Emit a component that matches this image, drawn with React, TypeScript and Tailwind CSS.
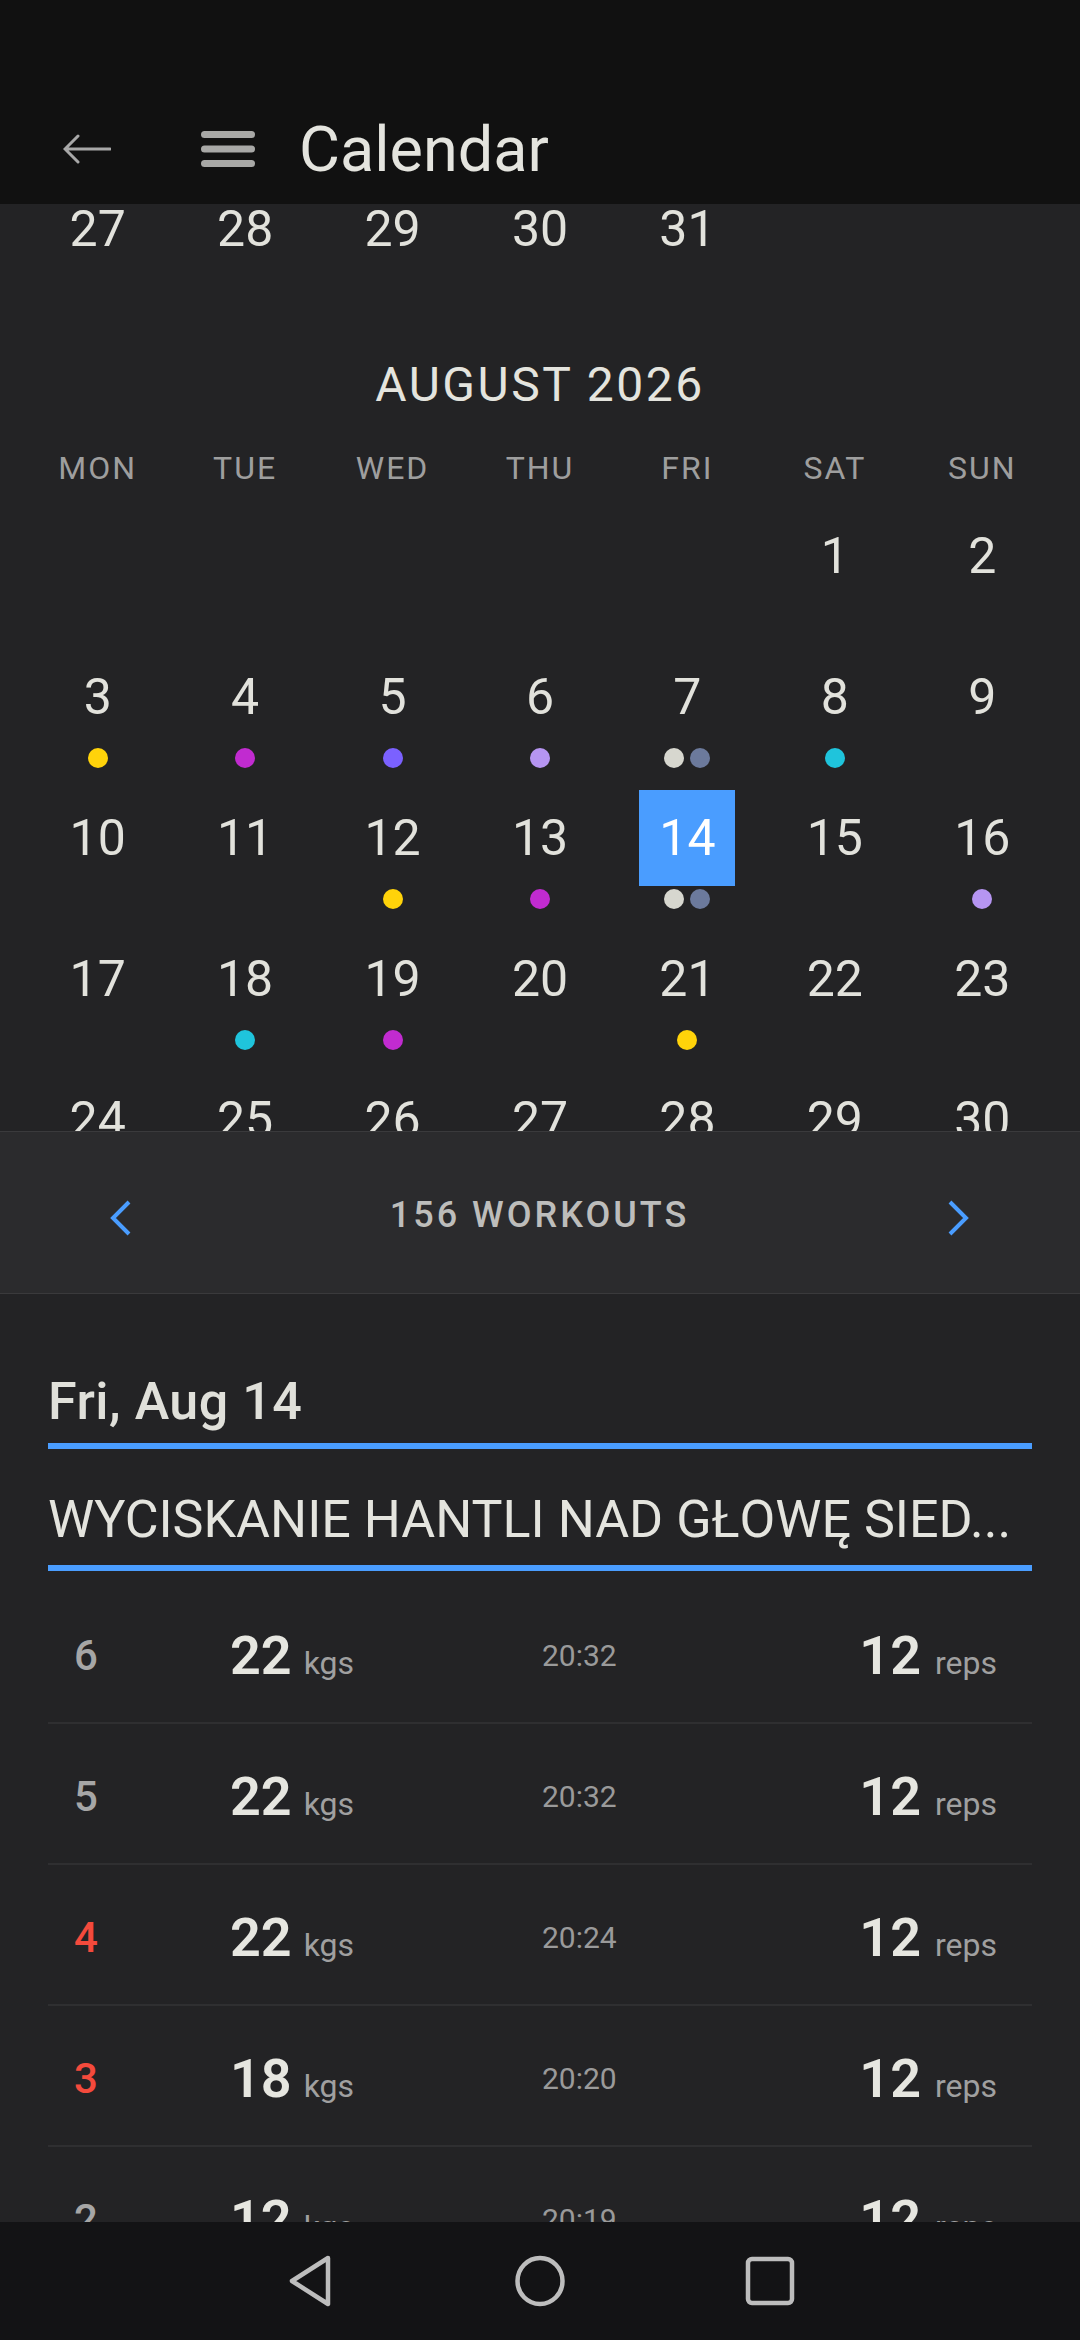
import React from "react";

const Y = "#ffd30a";
const M = "#c12bd0";
const I = "#7b61ff";
const L = "#b695f2";
const C = "#1fc4dc";
const G = "#d7d7cf";
const S = "#6c7a9c";

type Day = { n: number; dots?: string[]; selected?: boolean } | null;

const july: number[] = [27, 28, 29, 30, 31];

const weeks: Day[][] = [
  [null, null, null, null, null, { n: 1 }, { n: 2 }],
  [
    { n: 3, dots: [Y] },
    { n: 4, dots: [M] },
    { n: 5, dots: [I] },
    { n: 6, dots: [L] },
    { n: 7, dots: [G, S] },
    { n: 8, dots: [C] },
    { n: 9 },
  ],
  [
    { n: 10 },
    { n: 11 },
    { n: 12, dots: [Y] },
    { n: 13, dots: [M] },
    { n: 14, dots: [G, S], selected: true },
    { n: 15 },
    { n: 16, dots: [L] },
  ],
  [
    { n: 17 },
    { n: 18, dots: [C] },
    { n: 19, dots: [M] },
    { n: 20 },
    { n: 21, dots: [Y] },
    { n: 22 },
    { n: 23 },
  ],
  [{ n: 24 }, { n: 25 }, { n: 26 }, { n: 27 }, { n: 28 }, { n: 29 }, { n: 30 }],
];

const sets = [
  { set: 6, kg: 22, time: "20:32", reps: 12, red: false },
  { set: 5, kg: 22, time: "20:32", reps: 12, red: false },
  { set: 4, kg: 22, time: "20:24", reps: 12, red: true },
  { set: 3, kg: 18, time: "20:20", reps: 12, red: true },
  { set: 2, kg: 12, time: "20:19", reps: 12, red: false },
];

function WeekRow({ days }: { days: Day[] }) {
  return (
    <div className="grid grid-cols-7 px-[24px]">
      {days.map((d, i) => (
        <div key={i} className="flex flex-col items-center">
          <div
            className={
              "w-[96px] h-[96px] flex items-center justify-center text-[50px] " +
              (d?.selected ? "bg-[#4a9dff] text-white" : "text-[#e2e2dc]")
            }
          >
            {d ? d.n : ""}
          </div>
          <div className="h-[45px] flex justify-center gap-[6px] pt-[3px]">
            {d?.dots?.map((c, j) => (
              <span key={j} className="w-[20px] h-[20px] rounded-full" style={{ backgroundColor: c }} />
            ))}
          </div>
        </div>
      ))}
    </div>
  );
}

export default function App() {
  return (
    <div className="w-[1080px] h-[2340px] bg-[#232325] flex flex-col overflow-hidden font-['Roboto',sans-serif]">
      {/* top bar */}
      <header className="h-[204px] shrink-0 bg-[#111111] pt-[94px]">
        <div className="h-[110px] flex items-center pl-[63px]">
          <svg width="48" height="30" viewBox="0 0 48 30" fill="none" stroke="#a8a8a8" strokeWidth="3" strokeLinecap="round">
            <path d="M47 15H3M15 2L2 15l13 13" />
          </svg>
          <svg className="ml-[90px]" width="54" height="36" viewBox="0 0 54 36" fill="#a8a8a6">
            <rect x="0" y="0" width="54" height="7" rx="3.5" />
            <rect x="0" y="14.5" width="54" height="7" rx="3.5" />
            <rect x="0" y="29" width="54" height="7" rx="3.5" />
          </svg>
          <h1 className="ml-[44px] text-[63px] text-[#e4e4de] leading-none">Calendar</h1>
        </div>
      </header>

      {/* calendar, scrolled */}
      <div className="h-[927px] shrink-0 overflow-hidden">
        {/* tail of July, partly under the top bar */}
        <div className="grid grid-cols-7 px-[24px] h-[117px]">
          {july.map((n) => (
            <div key={n} className="h-[50px] flex items-center justify-center text-[50px] leading-[50px] text-[#e2e2dc]">
              {n}
            </div>
          ))}
        </div>
        <div className="mt-[34px] h-[60px] flex items-center justify-center text-[48px] tracking-[2.5px] text-[#e4e4de]">
          AUGUST 2026
        </div>
        <div className="mt-[29px] mb-[24px] h-[40px] grid grid-cols-7 px-[24px] text-[32px] tracking-[2px] text-[#9e9e9e]">
          {["MON", "TUE", "WED", "THU", "FRI", "SAT", "SUN"].map((w) => (
            <div key={w} className="flex items-center justify-center">
              {w}
            </div>
          ))}
        </div>
        {weeks.map((w, i) => (
          <WeekRow key={i} days={w} />
        ))}
      </div>

      {/* month switcher */}
      <div className="h-[163px] shrink-0 bg-[#2b2b2d] border-y border-[#3a3a3c] flex items-center justify-between pl-[109px] pr-[110px]">
        <svg className="mt-[10px]" width="22" height="36" viewBox="0 0 22 36" fill="none" stroke="#4a9dff" strokeWidth="4">
          <path d="M20 2L4 18l16 16" />
        </svg>
        <span className="mt-[4px] text-[36px] font-medium tracking-[3px] text-[#bdbdbb]">156 WORKOUTS</span>
        <svg className="mt-[10px]" width="22" height="36" viewBox="0 0 22 36" fill="none" stroke="#4a9dff" strokeWidth="4">
          <path d="M2 2l16 16L2 34" />
        </svg>
      </div>

      {/* day detail */}
      <div className="flex-1 overflow-hidden px-[48px] pt-[78px]">
        <div className="h-[60px] leading-[60px] text-[52px] font-medium tracking-[0.5px] text-[#e0e0da]">Fri, Aug 14</div>
        <div className="mt-[11px] h-[6px] bg-[#4a9dff]" />
        <div className="mt-[41px] h-[60px] leading-[60px] text-[52px] text-[#e4e4de] whitespace-nowrap overflow-hidden">
          WYCISKANIE HANTLI NAD GŁOWĘ SIED...
        </div>
        <div className="mt-[15px] h-[6px] bg-[#4a9dff]" />
        <div className="mt-[12px]">
          {sets.map((s) => (
            <div key={s.set} className="h-[141px] flex items-center pt-[6px] pl-[26px] pr-[35px] border-b-2 border-[#2f2f31]">
              <span className={"w-[156px] text-[42px] font-medium " + (s.red ? "text-[#f44a3c]" : "text-[#a6a6a6]")}>
                {s.set}
              </span>
              <span className="w-[312px] flex items-baseline gap-[12px]">
                <span className="text-[54px] font-semibold text-[#e6e6e0]">{s.kg}</span>
                <span className="text-[32px] text-[#a0a0a0]">kgs</span>
              </span>
              <span className="text-[30px] text-[#9a9a9a]">{s.time}</span>
              <span className="ml-auto flex items-baseline gap-[14px]">
                <span className="text-[54px] font-semibold text-[#e6e6e0]">{s.reps}</span>
                <span className="text-[32px] text-[#a0a0a0]">reps</span>
              </span>
            </div>
          ))}
        </div>
      </div>

      {/* system nav */}
      <nav className="h-[118px] shrink-0 bg-[#131315] flex items-center justify-center">
        <div className="w-[230px] flex justify-center">
          <svg width="48" height="52" viewBox="0 0 48 52" fill="none" stroke="#bdbdbd" strokeWidth="4.5" strokeLinejoin="round">
            <path d="M42 3L6 26l36 23z" />
          </svg>
        </div>
        <div className="w-[230px] flex justify-center">
          <svg width="52" height="52" viewBox="0 0 52 52" fill="none" stroke="#bdbdbd" strokeWidth="4.5">
            <ellipse cx="26" cy="26" rx="22.5" ry="23" />
          </svg>
        </div>
        <div className="w-[230px] flex justify-center">
          <svg width="50" height="50" viewBox="0 0 50 50" fill="none" stroke="#bdbdbd" strokeWidth="4.5">
            <rect x="3" y="3" width="44" height="44" rx="4" />
          </svg>
        </div>
      </nav>
    </div>
  );
}
